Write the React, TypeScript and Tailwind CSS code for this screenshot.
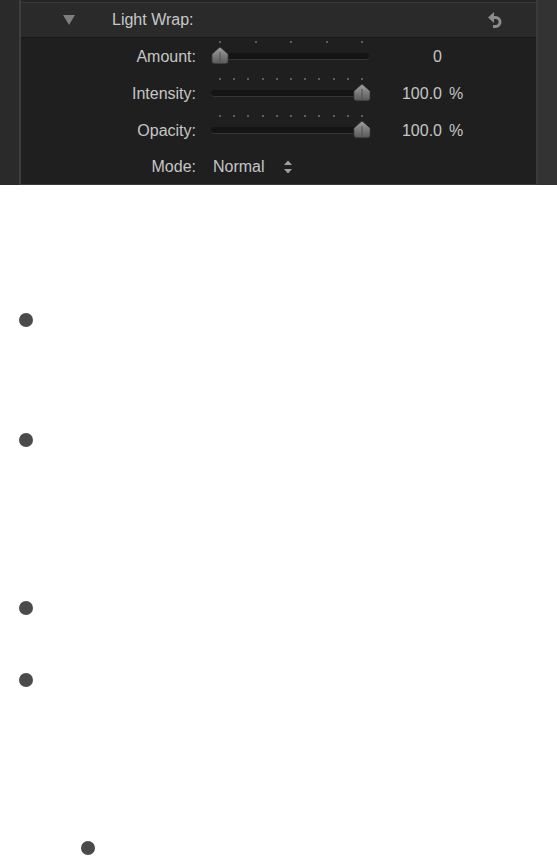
import React from "react";

const font = { fontFamily: '"Liberation Sans", Arial, sans-serif' };

function Thumb() {
  return (
    <svg width="18" height="19" viewBox="0 0 18 19" className="block">
      <defs>
        <linearGradient id="thumbFill" x1="0" y1="0" x2="0" y2="1">
          <stop offset="0" stopColor="#a2a2a2" />
          <stop offset="0.5" stopColor="#7c7c7c" />
          <stop offset="1" stopColor="#575757" />
        </linearGradient>
      </defs>
      <path
        d="M0.75 15.5 V8 L9 0.8 L17.25 8 V15.5 Q17.25 18 15 18 H3 Q0.75 18 0.75 15.5 Z"
        fill="url(#thumbFill)"
        stroke="#242424"
        strokeWidth="1"
      />
      <line x1="9" y1="6" x2="9" y2="17.5" stroke="#505050" strokeWidth="1" />
    </svg>
  );
}

function Slider({ ticks, value }: { ticks: number; value: number }) {
  const dots = Array.from({ length: ticks }, (_, i) => i);
  return (
    <div className="relative w-[158px] h-[37px]">
      <div className="absolute left-[8px] right-[6px] top-[3px] flex justify-between">
        {dots.map((i) => (
          <span key={i} className="block w-[2px] h-[2px] bg-[#5c5c5c]" />
        ))}
      </div>
      <div className="absolute left-0 right-0 top-[15px] h-[7px] rounded-full bg-[#141414] border-b border-[#363636]" />
      <div className="absolute top-[8px]" style={{ left: `${value * 142}px` }}>
        <Thumb />
      </div>
    </div>
  );
}

function Row({ label, children }: { label: string; children: React.ReactNode }) {
  return (
    <div className="flex items-center h-[37px]">
      <div className="w-[175px] text-right text-[16px] text-[#c6c6c6]">{label}</div>
      {children}
    </div>
  );
}

function SliderRow({
  label,
  ticks,
  value,
  display,
  unit,
}: {
  label: string;
  ticks: number;
  value: number;
  display: string;
  unit?: string;
}) {
  return (
    <Row label={label}>
      <div className="ml-[15px]">
        <Slider ticks={ticks} value={value} />
      </div>
      <div className="w-[73px] text-right text-[16px] text-[#c6c6c6]">{display}</div>
      {unit && <div className="ml-[7px] text-[16px] text-[#c6c6c6]">{unit}</div>}
    </Row>
  );
}

function UndoIcon() {
  return (
    <svg width="16" height="18" viewBox="0 0 16 18">
      <path d="M1 6.5 L7 1 V12 Z" fill="#8c8c8c" />
      <path
        d="M6 6.5 H8.5 A4.5 4.5 0 0 1 8.5 15.5 H6"
        fill="none"
        stroke="#8c8c8c"
        strokeWidth="3"
      />
    </svg>
  );
}

function Stepper() {
  return (
    <svg width="10" height="16" viewBox="0 0 10 16" className="block">
      <path d="M1 6 L5 1.5 L9 6 Z" fill="#a0a0a0" />
      <path d="M1 10 L5 14.5 L9 10 Z" fill="#a0a0a0" />
    </svg>
  );
}

function Bullet({ className }: { className: string }) {
  return <div className={`w-[14px] h-[14px] rounded-full bg-[#4a4a4a] ${className}`} />;
}

export default function App() {
  return (
    <div className="w-[557px] h-[856px] bg-white overflow-hidden" style={font}>
      {/* inspector panel */}
      <div className="flex h-[185px]">
        <div className="w-[19px] bg-[#2a2a2a]" />
        <div className="w-[2px] bg-[#3e3e3e]" />
        <div className="flex-1 flex flex-col bg-[#1f1f1f]">
          <div className="h-[2px] bg-[#242424]" />
          <div className="h-[1px] bg-[#383838]" />
          <div className="h-[35px] bg-[#2a2a2a] flex items-center">
            <svg width="14" height="12" viewBox="0 0 14 12" className="ml-[41px]">
              <path d="M1 1 H13 L7 11 Z" fill="#7e7e7e" />
            </svg>
            <span className="ml-[36px] text-[16px] text-[#c8c8c8]">Light Wrap:</span>
            <div className="ml-auto mr-[33px] flex items-center">
              <UndoIcon />
            </div>
          </div>
          <div className="h-[1px] bg-[#181818]" />
          <div className="flex flex-col">
            <SliderRow label="Amount:" ticks={5} value={0} display="0" />
            <SliderRow label="Intensity:" ticks={11} value={1} display="100.0" unit="%" />
            <SliderRow label="Opacity:" ticks={11} value={1} display="100.0" unit="%" />
            <div className="flex items-center h-[35px]">
              <div className="w-[175px] text-right text-[16px] text-[#c6c6c6]">Mode:</div>
              <span className="ml-[17px] text-[16px] text-[#c6c6c6]">Normal</span>
              <div className="ml-[18px]">
                <Stepper />
              </div>
            </div>
          </div>
          <div className="mt-auto h-[1px] bg-[#3a3a3a]" />
        </div>
        <div className="w-[2px] bg-[#3a3a3a]" />
        <div className="w-[19px] bg-[#333333]" />
      </div>

      {/* list bullets */}
      <div className="flex flex-col">
        <Bullet className="ml-[19px] mt-[128px]" />
        <Bullet className="ml-[19px] mt-[106px]" />
        <Bullet className="ml-[19px] mt-[154px]" />
        <Bullet className="ml-[19px] mt-[58px]" />
        <Bullet className="ml-[81px] mt-[154px]" />
      </div>
    </div>
  );
}
